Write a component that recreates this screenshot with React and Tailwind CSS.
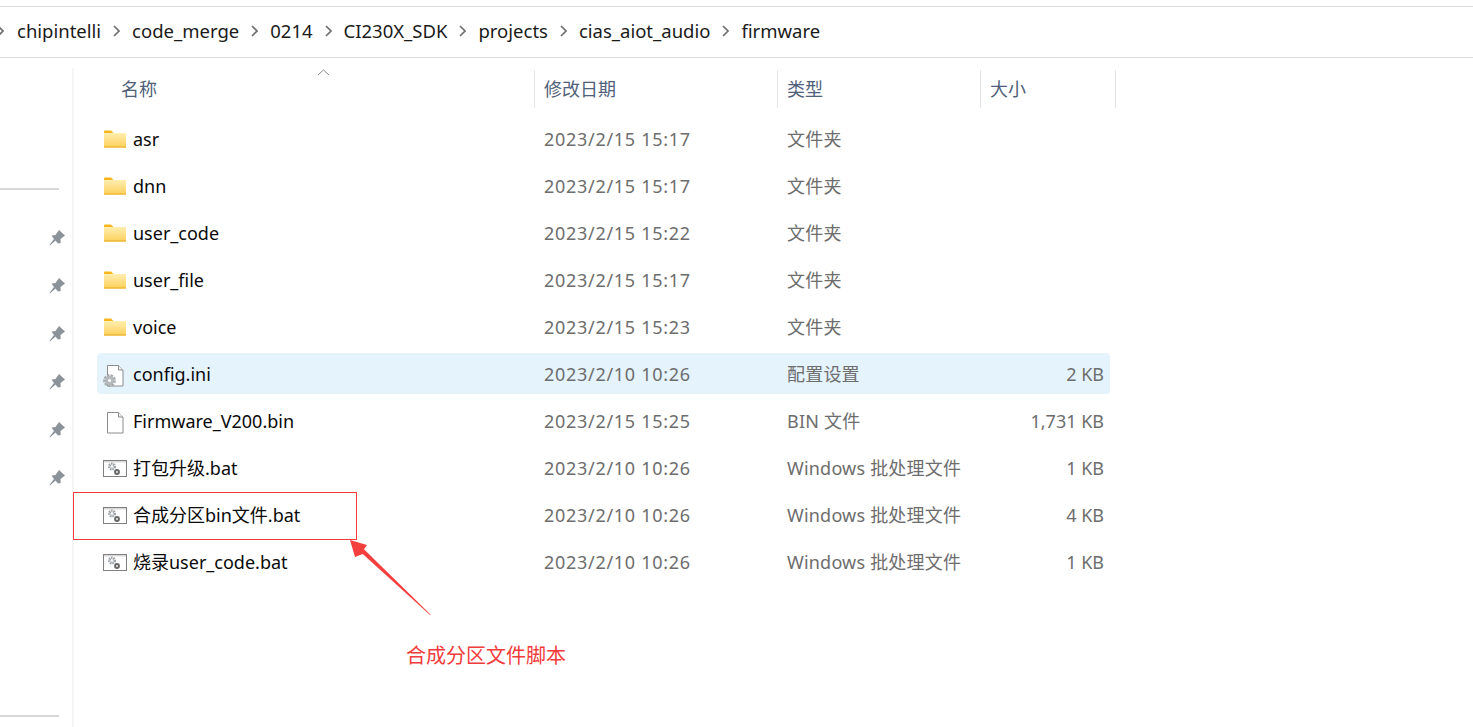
const FONT = "font-['Noto_Sans','Noto_Sans_CJK_SC',sans-serif]";

const files = [
  { name: "asr", date: "2023/2/15 15:17", type: "文件夹", size: "", icon: "folder" },
  { name: "dnn", date: "2023/2/15 15:17", type: "文件夹", size: "", icon: "folder" },
  { name: "user_code", date: "2023/2/15 15:22", type: "文件夹", size: "", icon: "folder" },
  { name: "user_file", date: "2023/2/15 15:17", type: "文件夹", size: "", icon: "folder" },
  { name: "voice", date: "2023/2/15 15:23", type: "文件夹", size: "", icon: "folder" },
  { name: "config.ini", date: "2023/2/10 10:26", type: "配置设置", size: "2 KB", icon: "ini", selected: true },
  { name: "Firmware_V200.bin", date: "2023/2/15 15:25", type: "BIN 文件", size: "1,731 KB", icon: "file" },
  { name: "打包升级.bat", date: "2023/2/10 10:26", type: "Windows 批处理文件", size: "1 KB", icon: "bat" },
  { name: "合成分区bin文件.bat", date: "2023/2/10 10:26", type: "Windows 批处理文件", size: "4 KB", icon: "bat" },
  { name: "烧录user_code.bat", date: "2023/2/10 10:26", type: "Windows 批处理文件", size: "1 KB", icon: "bat" },
];

const crumbs = ["chipintelli", "code_merge", "0214", "CI230X_SDK", "projects", "cias_aiot_audio", "firmware"];

const Chevron = ({ className = "" }) => (
  <svg width="7" height="12" viewBox="0 0 7 12" className={`shrink-0 ${className}`}>
    <path d="M1 1l5 5-5 5" fill="none" stroke="#6f6f6f" strokeWidth="1.7" />
  </svg>
);

const FolderIcon = () => (
  <svg width="24" height="20" viewBox="0 0 24 20" className="-mt-[2px]">
    <defs>
      <linearGradient id="folderFill" x1="0" y1="0" x2="0" y2="1">
        <stop offset="0" stopColor="#ffeeb0" />
        <stop offset="1" stopColor="#fdd05a" />
      </linearGradient>
    </defs>
    <path d="M1 2.500C1 2 1.400 1.500 2 1.500h6l2.500 2.500H1z" fill="#f6b71e" />
    <rect x="1" y="4" width="22" height="14.500" fill="url(#folderFill)" />
    <rect x="1" y="17.500" width="22" height="1" fill="#e8a91c" />
  </svg>
);

const FileIcon = ({ gear }) => (
  <svg width="24" height="24" viewBox="0 0 24 24">
    <path d="M4.500 2.500h11l4.500 4.500v16H4.500z" fill="#fff" stroke="#8c8c8c" />
    <path d="M15.500 2.500V7H20" fill="#f2f2f2" stroke="#8c8c8c" />
    {gear && (
      <g>
        <circle cx="6.500" cy="17.500" r="4.800" fill="none" stroke="#a4a9ae" strokeWidth="3.200" strokeDasharray="2.200 1.100" />
        <circle cx="6.500" cy="17.500" r="3.200" fill="none" stroke="#b4b8bc" strokeWidth="3.200" />
      </g>
    )}
  </svg>
);

const BatIcon = () => (
  <svg width="24" height="18" viewBox="0 0 24 18">
    <rect x="0.500" y="0.500" width="23" height="16" fill="#fff" stroke="#7f7f7f" />
    <rect x="1" y="1" width="22" height="1.500" fill="#d9d9d9" />
    <circle cx="9" cy="6.500" r="2.600" fill="none" stroke="#9ea3a8" strokeWidth="2.800" strokeDasharray="1.500 0.700" />
    <circle cx="14" cy="12" r="1.900" fill="none" stroke="#666666" strokeWidth="2" />
  </svg>
);

const PinIcon = () => (
  <svg width="18" height="18" viewBox="0 0 18 18">
    <path d="M3.500 6.500L7.500 6 11 1l6 5.500L12.500 10l.2 4-2.700.500-2.500-3L2 16.500 1.500 16 6 10z" fill="#8b9299" />
  </svg>
);

const icons = {
  folder: <FolderIcon />,
  file: <FileIcon />,
  ini: <FileIcon gear />,
  bat: <BatIcon />,
};

const Row = ({ file }) => (
  <div
    className={`grid grid-cols-[447px_243px_193px_130px] items-center h-[41px] pt-[2px] rounded-sm ${
      file.selected ? "bg-[#e5f3fd]" : ""
    }`}
  >
    <div className="flex items-center pl-[6px]">
      <span className="flex w-[30px] justify-start">{icons[file.icon]}</span>
      <span className="text-[#0a0a0a] whitespace-nowrap">{file.name}</span>
    </div>
    <span className="text-[#6d6d6d] tracking-[0.7px] whitespace-nowrap">{file.date}</span>
    <span className="text-[#6d6d6d] tracking-[0.2px] whitespace-nowrap">{file.type}</span>
    <span className="text-[#6d6d6d] text-right pr-[6px] whitespace-nowrap">{file.size}</span>
  </div>
);

const App = () => {
  return (
    <div className={`relative w-[1473px] h-[727px] overflow-hidden bg-white text-[18px] ${FONT}`}>
      {/* BREADCRUMB */}
      <div className="mt-[6px] flex h-[52px] items-center gap-[10px] border-y border-[#dcdcdc] pb-[2px] text-[18.5px] text-[#1a1a1a]">
        <Chevron className="-ml-[3px] mr-[3px]" />
        {crumbs.map((crumb, i) => (
          <div key={crumb} className="flex items-center gap-[10px]">
            {i > 0 && <Chevron className="mx-[2px]" />}
            <span>{crumb}</span>
          </div>
        ))}
      </div>

      <div className="flex h-[669px]">
        {/* SIDEBAR */}
        <div className="mt-[10px] flex h-[659px] w-[74px] shrink-0 flex-col border-r-2 border-[#f5f5f5]">
          <div className="mt-[120px] h-[2px] w-[59px] bg-[#d8d8d8]" />
          <div className="mt-[39px] flex flex-col items-end gap-[30px] pr-[6px]">
            {[0, 1, 2, 3, 4, 5].map((i) => (
              <PinIcon key={i} />
            ))}
          </div>
          <div className="mt-auto mb-[10px] h-[2px] w-[59px] bg-[#d8d8d8]" />
        </div>

        {/* FILE LIST */}
        <div className="ml-[23px] w-[1019px]">
          <div className="relative mt-[10px] grid h-[40px] grid-cols-[438px_243px_203px_135px] pt-[2px] text-[#4f617a]">
            <div className="flex items-center border-r border-[#e5e5e5] pl-[24px]">名称</div>
            <div className="flex items-center border-r border-[#e5e5e5] pl-[9px]">修改日期</div>
            <div className="flex items-center border-r border-[#e5e5e5] pl-[9px]">类型</div>
            <div className="flex items-center border-r border-[#e5e5e5] pl-[9px]">大小</div>
            <svg width="13" height="7" viewBox="0 0 13 7" className="absolute left-[220px] top-[1px]">
              <path d="M1 6l5.500-5 5.500 5" fill="none" stroke="#8a8a8a" />
            </svg>
          </div>
          <div className="mt-[10px] flex w-[1013px] flex-col gap-[6px]">
            {files.map((file) => (
              <Row key={file.name} file={file} />
            ))}
          </div>
        </div>
      </div>

      {/* ANNOTATION */}
      <div className="absolute left-[73px] top-[492px] h-[48px] w-[284px] border border-[#f23b3b]" />
      <svg width="90" height="80" viewBox="0 0 90 80" className="absolute left-[345px] top-[537px]">
        <path d="M5 3l17 5-3 4.300L85.500 77.500 85 78 17.700 17 10 20z" fill="#f53f3f" />
      </svg>
      <span className="absolute left-[406px] top-[642px] text-[20px] leading-[28px] text-[#f23b3b]">合成分区文件脚本</span>
    </div>
  );
};

export default App;
